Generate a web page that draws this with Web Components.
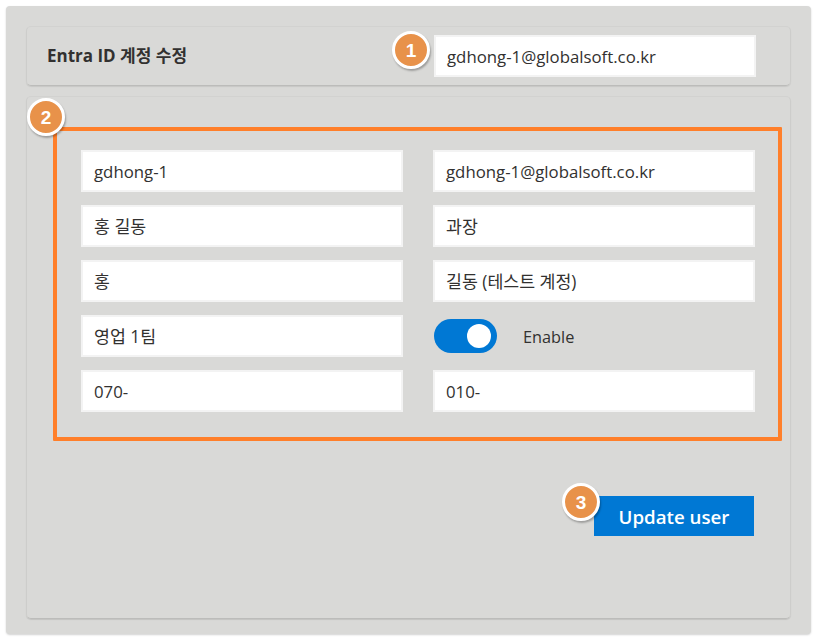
<!DOCTYPE html>
<html><head><meta charset="utf-8"><style>
html,body{margin:0;padding:0;background:#fff}
body{font-family:"Open Sans","Noto Sans CJK KR",sans-serif;width:817px;height:641px;overflow:hidden}
</style></head><body>
<edit-page>
  <edit-header title-text="Entra ID 계정 수정" slot="head">
    <step-badge n="1" style="left:365px;top:4px"></step-badge>
    <text-box value="gdhong-1@globalsoft.co.kr"></text-box>
  </edit-header>
  <form-card slot="body">
    <step-badge n="2" slot="badge" style="left:0;top:1px"></step-badge>
    <text-box slot="f" value="gdhong-1"></text-box>
    <text-box slot="f" value="gdhong-1@globalsoft.co.kr"></text-box>
    <text-box slot="f" ko value="홍 길동"></text-box>
    <text-box slot="f" ko value="과장"></text-box>
    <text-box slot="f" ko value="홍"></text-box>
    <text-box slot="f" ko value="길동 (테스트 계정)"></text-box>
    <text-box slot="f" ko value="영업 1팀"></text-box>
    <toggle-field slot="f" label="Enable"></toggle-field>
    <text-box slot="f" value="070-"></text-box>
    <text-box slot="f" value="010-"></text-box>
    <update-button slot="action">Update user</update-button>
  </form-card>
</edit-page>
<script>
function el(name, css, html){
  customElements.define(name, class extends HTMLElement{
    connectedCallback(){
      if(this.shadowRoot) return;
      const r=this.attachShadow({mode:'open'});
      r.innerHTML='<style>'+css+'</style>'+(typeof html==='function'?html(this):html);
    }
  });
}
el('edit-page',`
:host{display:block;padding:6px;box-sizing:border-box;height:641px}
.p{height:628px;box-sizing:border-box;background:#d9d9d7;border-radius:4px;padding:20px 20px 15px;display:flex;flex-direction:column;gap:10px;box-shadow:0 1px 2px rgba(0,0,0,.18)}
`,`<div class="p"><slot name="head"></slot><slot name="body"></slot></div>`);
el('edit-header',`
:host{display:flex;flex:none;position:relative;align-items:center;justify-content:space-between;height:60px;box-sizing:border-box;border-radius:5px;padding:0 34px 0 20px;border:1px solid #cdcdcb;border-top-color:#d2d2d0;border-bottom-color:#bcbcba;box-shadow:0 1px 1px rgba(0,0,0,.08)}
h1{margin:0;font-size:17px;font-weight:700;color:#323130;line-height:22px}
::slotted(text-box){width:322px}
`,h=>`<h1>${h.getAttribute('title-text')}</h1><slot></slot>`);
el('form-card',`
:host{display:flex;flex:none;flex-direction:column;position:relative;height:523px;box-sizing:border-box;border-radius:5px;padding:30px 8px 0 26px;border:1px solid #cdcdcb;border-top-color:#d2d2d0;border-bottom-color:#bcbcba;box-shadow:0 1px 1px rgba(0,0,0,.1)}
.box{border:4px solid #ff7f2a;border-radius:1px;width:729px;height:314px;box-sizing:border-box;padding:19px 23px 0 24px}
.grid{display:grid;grid-template-columns:322px 322px;column-gap:30px;grid-auto-rows:42px;row-gap:13px}
.act{display:flex;justify-content:flex-end;padding:55px 28px 0 0;width:729px;box-sizing:border-box}
`,`<slot name="badge"></slot><div class="box"><div class="grid"><slot name="f"></slot></div></div><div class="act"><slot name="action"></slot></div>`);
el('text-box',`
:host{display:block;height:42px;box-sizing:border-box;background:#fff;border:2px solid #f3f3f3;padding:0 11px;font-size:16.8px;line-height:40px;color:#323130;white-space:nowrap;overflow:hidden;font-family:"Open Sans","Noto Sans CJK KR",sans-serif}
:host([ko]){font-size:17.3px}
`,h=>`<span>${h.getAttribute('value')}</span>`);
el('toggle-field',`
:host{display:flex;align-items:center;height:42px;gap:26px;color:#323130;font-size:16.3px;font-family:"Open Sans","Noto Sans CJK KR",sans-serif}
span{position:relative;top:1px}
.t{width:63px;height:34px;margin-left:1px;border-radius:17px;background:#0078d4;position:relative;flex:none}
.k{position:absolute;width:24px;height:24px;border-radius:50%;background:#fff;left:33px;top:5px}
`,h=>`<div class="t"><div class="k"></div></div><span>${h.getAttribute('label')}</span>`);
el('update-button',`
:host{display:block;position:relative;width:160px;height:40px;background:#0078d4;color:#fff;text-align:center;font-size:18.7px;font-weight:600;line-height:42px;font-family:"Open Sans","Noto Sans CJK KR",sans-serif}
.b{position:absolute;left:-32px;top:-13px}
`,`<step-badge class="b" n="3"></step-badge><slot></slot>`);
el('step-badge',`
:host{display:flex;position:absolute;z-index:2;width:38px;height:38px;box-sizing:border-box;border-radius:50%;background:#e8924a;border:3px solid #fff;box-shadow:1px 2px 2px rgba(0,0,0,.28);color:#fff;align-items:center;justify-content:center;font:700 19px/1 "Liberation Sans",sans-serif}
`,h=>`${h.getAttribute('n')}`);
</script>
</body></html>
